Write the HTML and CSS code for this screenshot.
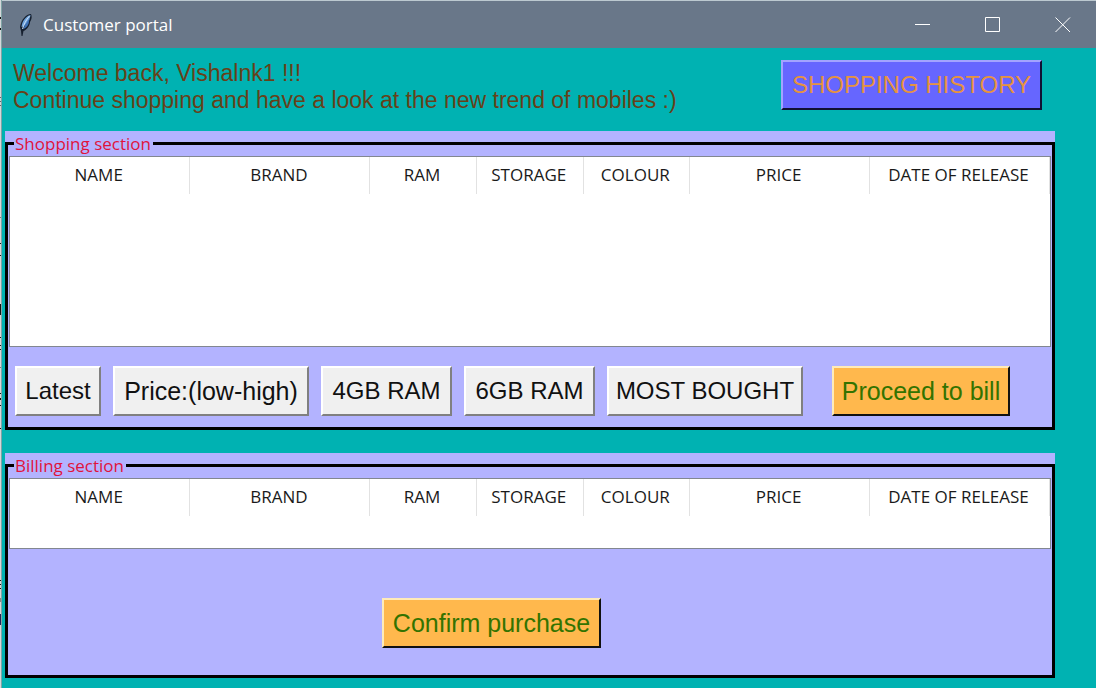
FILE: index.html
```html
<!DOCTYPE html>
<html lang="en">
<head>
<meta charset="utf-8">
<title>Customer portal</title>
<link rel="stylesheet" href="styles.css">
</head>
<body>
<div class="edge"></div>
<div class="window">
  <header class="titlebar">
    <svg class="feather" viewBox="0 0 18 26" width="18" height="26" aria-hidden="true">
      <path d="M14 2 C9 2 4 8 3 15 L4 19 L4.500 24 L5.500 24 L6.500 19 C10 18 13 13 13 10 C15 7 15 4 14 2Z" fill="#16202f"/>
      <path d="M13.500 3 C9 4 5 9 4.500 15 C9 14 13 8 13.500 3Z" fill="#6fa3dc"/>
      <path d="M13 6 C10 9 8 13 6 17 C10 16 12 12 12 9Z" fill="#3d70b4"/>
      <path d="M12.500 4 C9 8 7 12 5.500 17" fill="none" stroke="#c9def5" stroke-width="1"/>
    </svg>
    <h1 class="title">Customer portal</h1>
    <div class="controls">
      <button class="control" aria-label="Minimize"><svg viewBox="0 0 16 16" width="16" height="16"><path d="M0 7.500H15"/></svg></button>
      <button class="control" aria-label="Maximize"><svg viewBox="0 0 16 16" width="16" height="16"><path d="M.5 .5H14.500V14.500H.5Z"/></svg></button>
      <button class="control" aria-label="Close"><svg viewBox="0 0 16 16" width="16" height="16"><path d="M.5 .5L15 15M15 .5L.5 15"/></svg></button>
    </div>
  </header>
  <main class="content">
    <div class="intro">
      <p class="welcome">Welcome back, Vishalnk1 !!!<br>Continue shopping and have a look at the new trend of mobiles :)</p>
      <button class="btn caps history">SHOPPING HISTORY</button>
    </div>
    <div class="panel">
      <fieldset class="group">
        <legend>Shopping section</legend>
        <div class="list tall">
          <table>
            <colgroup><col class="wide"><col class="wide"><col class="narrow"><col class="narrow"><col class="narrow"><col class="wide"><col class="wide"></colgroup>
            <thead><tr><th>NAME</th><th>BRAND</th><th>RAM</th><th>STORAGE</th><th>COLOUR</th><th>PRICE</th><th>DATE OF RELEASE</th></tr></thead>
            <tbody></tbody>
          </table>
        </div>
        <div class="actions">
          <button class="btn caps small">Latest</button>
          <button class="btn large">Price:(low-high)</button>
          <button class="btn caps medium">4GB RAM</button>
          <button class="btn caps medium">6GB RAM</button>
          <button class="btn caps large">MOST BOUGHT</button>
          <button class="btn accent proceed">Proceed to bill</button>
        </div>
      </fieldset>
    </div>
    <div class="panel">
      <fieldset class="group">
        <legend>Billing section</legend>
        <div class="list short">
          <table>
            <colgroup><col class="wide"><col class="wide"><col class="narrow"><col class="narrow"><col class="narrow"><col class="wide"><col class="wide"></colgroup>
            <thead><tr><th>NAME</th><th>BRAND</th><th>RAM</th><th>STORAGE</th><th>COLOUR</th><th>PRICE</th><th>DATE OF RELEASE</th></tr></thead>
            <tbody></tbody>
          </table>
        </div>
        <div class="confirm">
          <button class="btn accent purchase">Confirm purchase</button>
        </div>
      </fieldset>
    </div>
  </main>
</div>
</body>
</html>
```
FILE: styles.css
```css
* { box-sizing: border-box; }

body {
  margin: 0;
  min-height: 100vh;
  display: flex;
  background: #00b2b2;
  font-family: "Open Sans", "Noto Sans", sans-serif;
}

/* sliver of the desktop behind the window */
.edge {
  flex: none;
  width: 2px;
  border-right: 1px solid #7fa3a5;
  background: linear-gradient(#d4d8da 0 17px, #111 17px 19px, #d4d8da 19px 28px, #111 28px 30px,
    #d4d8da 30px 97px, #666 97px 98px, #d4d8da 98px 101px, #666 101px 102px, #d4d8da 102px 105px, #666 105px 106px,
    #d4d8da 106px 217px, #777 217px 218px, #d4d8da 218px 243px, #111 243px 244px,
    #d4d8da 244px 255px, #111 255px 256px, #d4d8da 256px 304px, #111 304px 315px,
    #d4d8da 315px 337px, #111 337px 338px, #d4d8da 338px 345px, #111 345px 346px,
    #d4d8da 346px 349px, #111 349px 350px, #d4d8da 350px 367px, #777 367px 368px,
    #d4d8da 368px 393px, #111 393px 394px, #d4d8da 394px 398px, #111 398px 400px,
    #d4d8da 400px 405px, #111 405px 406px, #d4d8da 406px 428px, #111 428px 429px,
    #d4d8da 429px 580px, #111 580px 581px, #d4d8da 581px 584px, #111 584px 585px,
    #d4d8da 585px 588px, #111 588px 589px, #d4d8da 589px 598px, #888 598px 602px,
    #d4d8da 602px 614px, #225 614px 625px, #d4d8da 625px);
}

.window { flex: 1; min-width: 0; }

.titlebar {
  display: flex;
  align-items: center;
  height: 48px;
  padding-left: 15px;
  border-top: 1px solid #bcc9d0;
  background: #697789;
  color: #fff;
}

.feather { flex: none; margin-right: 8px; }
.title { margin: 0; font-size: 17px; line-height: 24px; font-weight: 400; }
.controls { display: flex; margin-left: auto; }

.control {
  width: 70px;
  height: 47px;
  padding: 0 0 0 3px;
  border: 0;
  background: none;
}
.control svg { display: block; margin: 0 auto; fill: none; stroke: #fff; stroke-width: 1; }

.content { padding: 12px 41px 10px 3px; }

.intro {
  display: flex;
  justify-content: space-between;
  align-items: flex-start;
  height: 71px;
  padding: 0 13px 0 8px;
}

.welcome {
  margin: 0;
  font: 23px/27px "Liberation Sans", Arial, sans-serif;
  color: #664119;
}

.panel { background: #b3b3ff; }
.panel + .panel { margin-top: 23px; }

.group {
  min-width: 0;
  margin: 0;
  padding: 0 1px;
  border: 3px solid #000;
}

.group legend {
  margin-left: 5px;
  padding: 0 2px 0 1px;
  font-size: 17px;
  line-height: 25px;
  color: #e0143c;
}

.list { border: 1px solid #828790; background: #fff; }
.tall { min-height: 191px; }
.short { min-height: 71px; }

table { width: 100%; table-layout: fixed; border-collapse: collapse; }
.wide { width: 17.3%; }
.narrow { width: 10.250%; }

th {
  height: 37px;
  padding: 0 2px 2px 0;
  border-right: 1px solid #e2e2e2;
  font-size: 17px;
  line-height: 24px;
  font-weight: 400;
  color: #1a1a1a;
  white-space: nowrap;
}

.actions { display: flex; gap: 12px; padding: 19px 6px 11px; }

.btn {
  flex: none;
  height: 50px;
  padding: 0;
  border: 2px solid;
  border-color: #fff #808080 #808080 #fff;
  background: #f0f0f0;
  font: 25px/28px "Liberation Sans", Arial, sans-serif;
  color: #111;
  white-space: nowrap;
}
.caps { font-size: 24px; }
.small { width: 86px; }
.medium { width: 131px; }
.large { width: 196px; }

.accent {
  border-color: #ffebb8 #111 #111 #ffebb8;
  background: #ffb84d;
  color: #337300;
}
.proceed { width: 178px; margin-left: 17px; }
.purchase { width: 219px; }

.history {
  width: 261px;
  border-color: #a3a3ff #111133 #111133 #a3a3ff;
  background: #6666ff;
  color: #e69340;
}

.confirm { display: flex; justify-content: center; padding: 49px 77px 27px 0; }
```
